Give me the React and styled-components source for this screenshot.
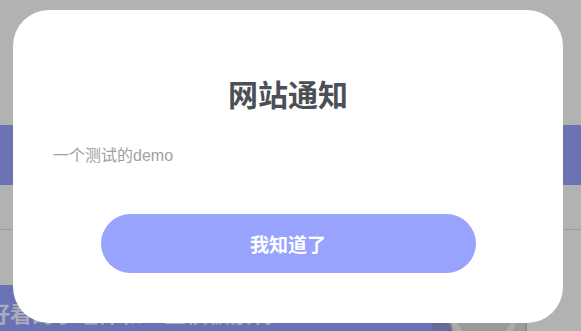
import React from "react";
import styled, { createGlobalStyle } from "styled-components";

const GlobalStyle = createGlobalStyle`
  html, body {
    margin: 0;
    padding: 0;
    overflow: hidden;
  }
  body {
    font-family: "Noto Sans CJK SC", "Liberation Sans", sans-serif;
  }
`;

const Page = styled.div`
  position: relative;
  width: 100vw;
  height: 100vh;
  background: #b2b2b2;
  overflow: hidden;
`;

// page behind the dimmed overlay
const Backdrop = styled.div`
  display: flex;
  flex-direction: column;
  padding-top: 125px;
`;

const Banner = styled.div`
  height: 60px;
  background: #6b72b3;
`;

const Section = styled.div`
  height: ${(p) => p.h}px;
  border-bottom: ${(p) => (p.line ? "1px solid #9c9c9c" : "none")};
`;

const Footer = styled.div`
  display: flex;
  height: 46px;
`;

const FooterBand = styled.div`
  width: 432px;
  background: #6b72b3;
  overflow: hidden;
  display: flex;
  align-items: flex-end;
`;

const FooterText = styled.span`
  margin-left: -12px;
  padding-bottom: 3px;
  font-size: 22px;
  font-weight: 700;
  color: #a9abbd;
  white-space: nowrap;
`;

const FooterArt = styled.div`
  width: 93px;
  background: #9b9b9b;
  border-right: 2px solid #8a8a8a;
  overflow: hidden;
`;

const Modal = styled.div`
  position: absolute;
  left: 13px;
  top: 10px;
  width: 550px;
  height: 313px;
  background: #fff;
  border-radius: 36px;
  display: flex;
  flex-direction: column;
  box-sizing: border-box;
  padding-top: 63px;
`;

const Title = styled.h2`
  margin: 0;
  text-align: center;
  font-size: 30px;
  line-height: 40px;
  font-weight: 700;
  color: #4b5056;
`;

const Message = styled.p`
  margin: 33px 0 0;
  padding-left: 40px;
  font-size: 16px;
  line-height: 20px;
  color: #a0a0a0;
  font-family: "Liberation Sans", "Noto Sans CJK SC", sans-serif;
`;

const Button = styled.button`
  align-self: center;
  margin-top: 48px;
  width: 375px;
  height: 59px;
  border: none;
  border-radius: 30px;
  background: #98a3fe;
  color: #fff;
  font-family: "Noto Sans CJK SC", sans-serif;
  font-size: 19px;
  font-weight: 700;
  cursor: pointer;
`;

const App = () => {
  return (
    <Page>
      <GlobalStyle />
      <Backdrop>
        <Banner />
        <Section h={44} line />
        <Section h={55} />
        <Footer>
          <FooterBand>
            <FooterText>好看的小组件和一些模板素材</FooterText>
          </FooterBand>
          <FooterArt>
            <svg width="93" height="46" viewBox="0 0 93 46">
              <circle cx="-10" cy="48" r="30" fill="#666b9c" />
              <circle cx="52" cy="30" r="30" fill="none" stroke="#acacac" strokeWidth="6" />
            </svg>
          </FooterArt>
        </Footer>
      </Backdrop>

      <Modal>
        <Title>网站通知</Title>
        <Message>一个测试的demo</Message>
        <Button>我知道了</Button>
      </Modal>
    </Page>
  );
};

export default App;
